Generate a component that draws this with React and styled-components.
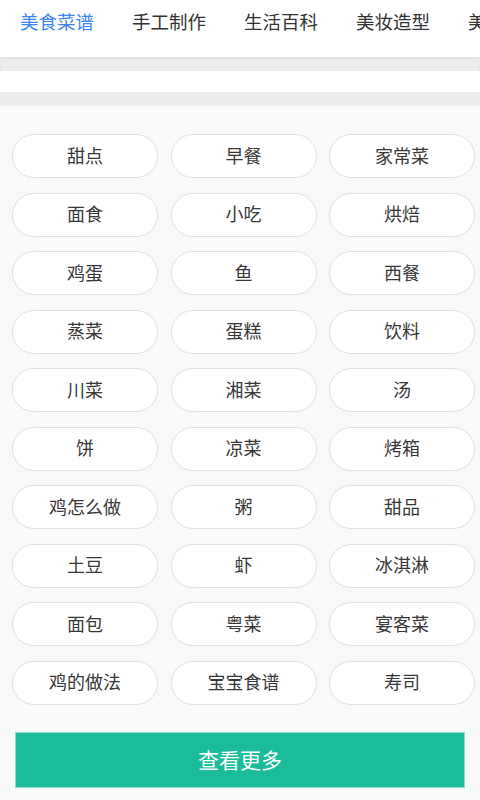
import React from 'react';
import styled, { createGlobalStyle } from 'styled-components';

const GlobalStyle = createGlobalStyle`
  html, body {
    margin: 0;
    padding: 0;
    background: #f9f9f9;
  }
  body {
    font-family: "Noto Sans CJK SC", "Noto Sans", sans-serif;
  }
`;

const Page = styled.div`
  width: 480px;
  height: 800px;
  overflow: hidden;
  background: #f9f9f9;
  display: flex;
  flex-direction: column;
`;

const TabBar = styled.div`
  height: 57px;
  background: #fff;
  display: flex;
  align-items: flex-start;
  padding-left: 20px;
  gap: 38px;
  white-space: nowrap;
  overflow: hidden;
`;

const Tab = styled.div`
  flex: none;
  padding-top: 7px;
  font-size: 18.5px;
  line-height: 28px;
  color: ${props => (props.active ? '#3d86f2' : '#333')};
`;

const Band = styled.div`
  height: ${props => props.h}px;
  background: ${props => props.bg};
  ${props => props.shadow && 'box-shadow: inset 0 2px 3px rgba(0,0,0,0.05);'}
`;

const Tags = styled.div`
  display: grid;
  grid-template-columns: repeat(3, 146px);
  column-gap: 12.5px;
  row-gap: 14.5px;
  padding: 28px 0 0 12px;
`;

const Tag = styled.div`
  height: 44px;
  box-sizing: border-box;
  padding-bottom: 3px;
  border: 1.5px solid #dde2e9;
  border-radius: 22px;
  background: #fff;
  display: flex;
  align-items: center;
  justify-content: center;
  font-size: 18px;
  color: #383838;
`;

const MoreButton = styled.button`
  margin: 27px 0 0 15px;
  width: 450px;
  height: 56px;
  padding: 0 0 2px;
  background: #1abc9c;
  border: 1px solid #8fdcc8;
  color: #fff;
  font-family: inherit;
  font-size: 21px;
  cursor: pointer;
`;

const tabs = ['美食菜谱', '手工制作', '生活百科', '美妆造型', '美容护肤'];

const tags = [
  '甜点', '早餐', '家常菜',
  '面食', '小吃', '烘焙',
  '鸡蛋', '鱼', '西餐',
  '蒸菜', '蛋糕', '饮料',
  '川菜', '湘菜', '汤',
  '饼', '凉菜', '烤箱',
  '鸡怎么做', '粥', '甜品',
  '土豆', '虾', '冰淇淋',
  '面包', '粤菜', '宴客菜',
  '鸡的做法', '宝宝食谱', '寿司'
];

export default function App() {
  return (
    <>
      <GlobalStyle />
      <Page>
        <TabBar>
          {tabs.map((t, i) => (
            <Tab key={t} active={i === 0}>
              {t}
            </Tab>
          ))}
        </TabBar>
        <Band h={14} bg="#ededed" shadow />
        <Band h={21} bg="#fff" />
        <Band h={14} bg="#ededed" />
        <Tags>
          {tags.map(t => (
            <Tag key={t}>{t}</Tag>
          ))}
        </Tags>
        <MoreButton>查看更多</MoreButton>
      </Page>
    </>
  );
}
